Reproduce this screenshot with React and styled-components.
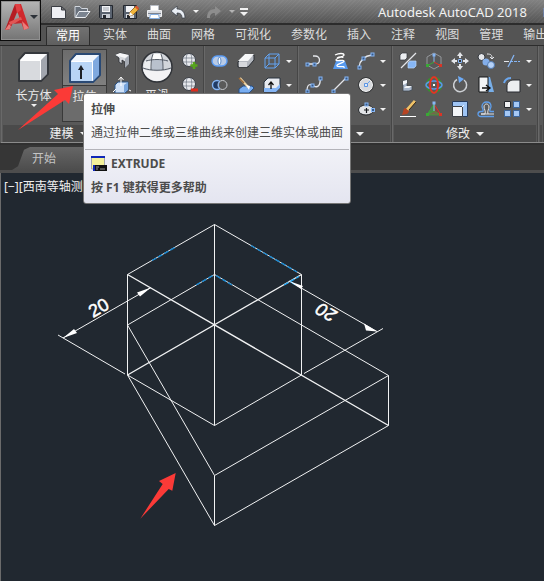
import React from "react";
import styled, { createGlobalStyle, css } from "styled-components";

const MENU_TABS = [
  "常用",
  "实体",
  "曲面",
  "网格",
  "可视化",
  "参数化",
  "插入",
  "注释",
  "视图",
  "管理",
  "输出",
];

const BLUE = "#86b6f5";
const LIGHT = "#e4e6ea";

const Logo = () => (
  <svg width="25" height="28" viewBox="0 0 25 28">
    <path d="M10 1h5l-2 6L5 26l-5 1z" fill="#b51d23" />
    <path d="M10 1h6l8 24-5 2-7-19z" fill="#d0282c" />
    <path d="M10 1h5l1 6-4 3z" fill="#e04043" />
    <path d="M4 19l12-5 1 3-12 5z" fill="#e25654" />
    <path d="M2 25l13-8 4 1-1 2-10 1-5 6z" fill="#c3262b" />
    <path d="M17 18l7 7-5 2z" fill="#e87d7a" />
    <path d="M0 27l4-6 2 2-1 3z" fill="#e87d7a" />
  </svg>
);

const Caret = ({ size = 6, color = "#f1f1f1" }) => (
  <svg width={size} height={size / 2} viewBox="0 0 6 3">
    <path d="M0 0h6L3 3z" fill={color} />
  </svg>
);

const QUICK = {
  新建: (
    <path
      d="M1.500 2.500h10l4 3.500v8.500h-14z M11.500 2.500v3.500h4"
      fill="#eeeff3"
      stroke="#3a3d43"
    />
  ),
  打开: (
    <>
      <path d="M1 13.500v-11h5l1.500 2h6v3" fill="#69717c" stroke="#d2d7de" />
      <path d="M1.500 13.500l3.500-6h11l-4.500 6z" fill="#7b8490" stroke="#eceff3" />
    </>
  ),
  保存: (
    <>
      <path d="M1.500 1.500h13v13h-12l-1-1z" fill="#5a6370" stroke="#23272e" />
      <path d="M4 2h8v6H4z" fill="#f2f3f6" />
      <path d="M5 4h6M5 6h6" stroke="#9ba1ab" />
      <path d="M4 10h8v4H4z" fill="#c8cdd6" />
      <path d="M5 11h3v3H5z" fill="#23272e" />
    </>
  ),
  另存为: (
    <>
      <path d="M1.500 1.500h13v13h-12l-1-1z" fill="#5a6370" stroke="#23272e" />
      <path d="M4 2h8v6H4z" fill="#f2f3f6" />
      <path d="M4 10h8v4H4z" fill="#d7dae0" />
      <path d="M5 11h3v3H5z" fill="#23272e" />
      <path d="M7 12l1-4 6-6 3 3-6 6z" fill="#f1b53b" stroke="#774b14" strokeWidth=".7" />
      <path d="M13 3l1.500-1.500 2.500 2.500L15.500 6z" fill="#d9532f" />
      <path d="M7 12l1-4 3 3z" fill="#fff" />
    </>
  ),
  打印: (
    <>
      <path d="M4.500 1.500h8v5h-8z" fill="#fff" stroke="#b7bcc5" />
      <path d="M1.500 6.500h14v6h-14z" fill="#d5d8de" stroke="#eff0f2" />
      <path d="M2 9.500h13" stroke="#7d8490" />
      <path d="M4.500 10.500h8l1 4h-10z" fill="#fff" stroke="#84ade0" />
    </>
  ),
  放弃: (
    <path
      d="M1 7l6-5v3c5 0 8 3 8 9h-3c0-3-1-5-5-5v3z"
      fill="#e9eef4"
      stroke="#343a43"
      strokeWidth=".7"
    />
  ),
  重做: <path d="M15 7L9 2v3c-5 0-8 3-8 9h3c0-3 1-5 5-5v3z" fill="#8d8d8d" />,
};

const BoxIcon = () => (
  <svg width="32" height="32" viewBox="0 0 32 32">
    <path
      d="M1 9l6-7h23v21l-7 7H1z"
      fill="#fff"
      stroke="#34373c"
      strokeWidth="2"
      strokeLinejoin="round"
    />
    <path d="M2 9l6-6h21l-6 6z" fill="#fcfcfd" />
    <path d="M2 10h20v19H2z" fill="#d8dade" />
    <path d="M23 9l6-6v20l-6 6z" fill="#a2a6ae" />
  </svg>
);

const ExtrudeIcon = () => (
  <svg width="32" height="32" viewBox="0 0 32 32">
    <path
      d="M1 9l6-7h24v21l-7 7H1z"
      fill="#fff"
      stroke="#294974"
      strokeWidth="2"
      strokeLinejoin="round"
    />
    <path d="M2 9l6-6h22l-6 6z" fill="#f2f7fd" />
    <path d="M2 10h21v19H2z" fill="#b9d5f5" />
    <path d="M24 9l6-6v20l-6 6z" fill="#7fa9df" />
    <path d="M12 27V15" stroke="#1c2026" strokeWidth="2" />
    <path d="M9 18l3-5 3 5z" fill="#1c2026" />
  </svg>
);

const SphereIcon = () => (
  <svg width="32" height="32" viewBox="0 0 32 32">
    <circle cx="16" cy="16" r="15" fill="#d3d6db" stroke="#303338" strokeWidth="1.500" />
    <path d="M2 18c7 3 21 3 28 0-1 7-7 12-14 12S3 25 2 18z" fill="#f3f3f5" />
    <path d="M11 9h10l1 10H10z" fill="#b9c1cd" />
    <path d="M11 3h10v6H11z" fill="#fdfdfd" />
    <path d="M4 10l7-1-1 10-8-2z" fill="#eceef0" />
    <path
      d="M5 10c7-2 15-2 22 0M2 17c8 3 20 3 28 0M12 3c-2 5-2 11-2 16M20 3c2 5 2 11 2 16"
      fill="none"
      stroke="#565d68"
    />
  </svg>
);

const MeshBall = () => (
  <>
    <circle cx="8" cy="8" r="6.500" fill="#e8eaee" stroke="#3b3f46" />
    <path
      d="M2 6h12M2 10h12M6 2c-1 4-1 7 0 12M10 2c1 4 1 7 0 12"
      fill="none"
      stroke="#6d7581"
      strokeWidth=".7"
    />
  </>
);

const Node = ({ x, y }) => (
  <rect x={x - 1} y={y - 1} width="3" height="3" fill="#375986" stroke={BLUE} />
);

const TOOLS = {
  多段体: (
    <>
      <path
        d="M2 3l5-2 9 2v9l-4 4v-6l-3-2v4l-3-2V6z"
        fill="#d8dade"
        stroke="#2b2f35"
        strokeWidth=".8"
      />
      <path d="M12 7l4-4v9l-4 4z" fill="#a6abb4" />
      <path d="M2 3l5-2 9 2-4 3z" fill="#f7f7f8" />
    </>
  ),
  按住并拖动: (
    <>
      <path d="M2 9l3-3h10v8l-3 3H2z" fill="#cfe1f7" stroke="#29548a" />
      <path d="M11 9l4-3v8l-4 3z" fill="#78a5dc" />
      <path d="M8 10V2M5.500 4L8 1l2.500 3M0 16l3-3M16 14l2 1" fill="none" stroke="#fff" />
    </>
  ),
  提高平滑度: (
    <>
      <MeshBall />
      <path d="M13 10v7M9.500 13.500h7" stroke="#57a51c" strokeWidth="2.600" />
    </>
  ),
  降低平滑度: (
    <>
      <MeshBall />
      <path d="M10 14h7" stroke="#dd2b1c" strokeWidth="3" />
    </>
  ),
  并集: (
    <>
      <rect
        x="1"
        y="4"
        width="15"
        height="10"
        rx="5"
        fill="#b9cbe6"
        stroke="#5a9cf5"
        strokeWidth="1.400"
      />
      <path d="M8.500 5c-2 2-2 6 0 8 2-2 2-6 0-8z" fill="#fff" stroke="#608fca" />
    </>
  ),
  差集: (
    <>
      <circle cx="6" cy="9" r="4.500" fill="#203b65" stroke={BLUE} strokeWidth="1.400" />
      <circle cx="11.500" cy="9" r="4.500" fill="#5a5a5a" stroke="#c5c8cd" />
      <path d="M9 5c-2 2-2 6 0 8" fill="none" stroke={BLUE} />
    </>
  ),
  剖切: (
    <>
      <path d="M1 10l6-7h10v5l-6 7H1z" fill="#b4b8bf" stroke="#292d33" />
      <path d="M1 9l7-7h9l-6 7z" fill="#f6f7f8" />
      <path d="M2 10h8v5H2z" fill="#d6d8dc" />
    </>
  ),
  干涉: (
    <>
      <path d="M2 13l4-3h9l2 2-5 5H2z" fill="#79aef1" stroke="#264f86" />
      <path d="M3 2l9 10" stroke="#ecd2a2" strokeWidth="2" />
      <path d="M2 2l5 5" stroke="#9b6c3b" strokeWidth="1.500" />
      <path d="M9 9l4 1-1 4z" fill="#fff" />
    </>
  ),
  提取边: (
    <path
      d="M2 6h10v10H2zM6 2h10v10H6zM2 6l4-4M12 6l4-4M2 16l4-4M12 16l4-4"
      fill="none"
      stroke="#63a3f2"
    />
  ),
  拉伸面: (
    <>
      <path d="M1 6l4-4h12v10l-4 4H1z" fill="#e8ebf0" stroke="#28323f" />
      <path d="M1 12h12l4-4v4l-4 4H1z" fill={BLUE} />
      <path d="M8 13V7M5.500 9L8 6l2.500 3" fill="none" stroke="#111" strokeWidth="1.300" />
    </>
  ),
  多段线: (
    <>
      <path d="M2 12h8c6 0 6-8 0-8H8" fill="none" stroke={LIGHT} strokeWidth="1.300" />
      <Node x={2} y={12} />
      <Node x={9} y={12} />
    </>
  ),
  螺旋: (
    <>
      <path d="M5 9h9l3 8H2z" fill="#5699ee" />
      <path
        d="M4 3c4-2 9-2 9 0s-8 3-8 5 8-1 8 1-8 3-7 5 8-1 7 2M6 6c3-2 6-1 6 0"
        fill="none"
        stroke="#fff"
        strokeWidth="1.300"
      />
    </>
  ),
  圆弧: (
    <>
      <path d="M2 15C3 8 7 4 15 3" fill="none" stroke={LIGHT} strokeWidth="1.300" />
      <Node x={2} y={15} />
      <Node x={6} y={6} />
      <Node x={15} y={2} />
    </>
  ),
  样条曲线: (
    <>
      <path d="M2 15c0-8 4-7 7-5s7 0 6-8" fill="none" stroke={LIGHT} strokeWidth="1.300" />
      <Node x={2} y={15} />
      <Node x={7} y={9} />
      <Node x={15} y={2} />
    </>
  ),
  直线: (
    <>
      <path d="M2 15L15 2" stroke={LIGHT} strokeWidth="1.300" />
      <Node x={2} y={15} />
      <Node x={15} y={2} />
    </>
  ),
  圆: (
    <>
      <circle cx="9" cy="9" r="6.500" fill="#d7d9dd" stroke="#fff" />
      <circle cx="9" cy="9" r="7.500" fill="none" stroke="#26292d" strokeWidth=".7" />
      <path d="M9 9l4-4" stroke="#67a2ee" />
      <path d="M7.500 7.500h3v3h-3z" fill="#dfe9f7" stroke="#5b95e4" />
    </>
  ),
  椭圆: (
    <>
      <ellipse cx="9" cy="10" rx="7.500" ry="5" fill="#e2e4e7" stroke="#26292d" />
      <path d="M7 10h5M9.500 8v5" stroke="#16191d" strokeWidth="1.200" />
      <Node x={9} y={4} />
      <Node x={15.5} y={9.5} />
    </>
  ),
  三维对齐: (
    <>
      <path d="M1 3l2-2h5v5L6 8H1z" fill="#eceef1" stroke="#30343a" strokeWidth=".7" />
      <path d="M9 11l2-2h6v5l-2 2H9z" fill={BLUE} stroke="#b9d5f8" strokeWidth=".7" />
      <path d="M2 16L17 1" stroke={LIGHT} strokeWidth="1.200" />
    </>
  ),
  三维移动: (
    <>
      <path d="M9 1L2 5v8l7 4 7-4V5z" fill="none" stroke="#95989c" />
      <path d="M9 10V3" stroke={BLUE} />
      <path d="M9 10l-7 4" stroke="#39a935" />
      <path d="M9 10l7 4" stroke="#db3425" />
      <path d="M7.500 1.500h3v3h-3z" fill={BLUE} />
      <path d="M1 12h3v3H1z" fill="#39a935" />
      <path d="M14 12h3v3h-3z" fill="#db3425" />
    </>
  ),
  移动: (
    <>
      <path
        d="M9 0l3 4h-2v2H8V4H6zM9 18l3-4h-2v-2H8v2H6zM0 9l4-3v2h2v2H4v2zM18 9l-4-3v2h-2v2h2v2z"
        fill={LIGHT}
      />
      <path d="M7.500 7.500h3v3h-3z" fill="#333" stroke={BLUE} />
    </>
  ),
  复制: (
    <>
      <circle cx="4.500" cy="5" r="3.500" fill="#e5e7eb" stroke="#33373d" />
      <circle cx="9" cy="10" r="3.500" fill="#83aeea" />
      <circle cx="14" cy="13" r="3.500" fill="#b5d1f7" stroke="#517bb2" />
      <path d="M10 2c4 0 5 1 5 4M13 5l2 2 2-2" fill="none" stroke={LIGHT} />
    </>
  ),
  修剪: (
    <>
      <path d="M1 9.500h5" stroke={LIGHT} />
      <path d="M7 9.500h10" stroke={BLUE} strokeDasharray="3 1" />
      <path d="M5 15L11 3" stroke={BLUE} strokeWidth="1.200" />
    </>
  ),
  三维镜像: (
    <>
      <path d="M4 5l4-1v6h5v4l-3 1H4z" fill="#abb8cb" stroke="#3b424c" strokeWidth=".7" />
      <path d="M4 5l4-1v3l-4 2zM7 10h6l-3 2H5z" fill="#f3f5f8" />
    </>
  ),
  三维旋转: (
    <>
      <circle cx="9" cy="9" r="7.500" fill="none" stroke="#36932c" strokeWidth="1.600" />
      <ellipse cx="9" cy="9" rx="8" ry="4" fill="none" stroke="#5798e8" strokeWidth="1.600" />
      <ellipse cx="9" cy="9" rx="4" ry="8" fill="none" stroke="#e43325" strokeWidth="2" />
      <path d="M8 8h2v2H8z" fill="#fff" />
    </>
  ),
  旋转: (
    <>
      <path d="M6 3.500a6.500 6.500 0 1 0 7 .500" fill="none" stroke="#cdd0d4" strokeWidth="1.500" />
      <path d="M7 0l6 3-5 4z" fill="#6caaf6" />
    </>
  ),
  拉长: (
    <>
      <path d="M11 1h2l4 15h-6z" fill="#78afe9" />
      <path d="M2 1h9v15H2z" fill="#f4f5f6" stroke="#151719" />
      <path d="M5 12h7M9 9l4 3-4 3" fill="none" stroke="#111" strokeWidth="1.400" />
    </>
  ),
  圆角: (
    <>
      <path d="M4 16V9c1-4 4-5 7-5h6v12z" fill="#eceef0" stroke="#282b30" />
      <path d="M1 7c1-3 3-5 7-5" fill="none" stroke="#6ba7ee" strokeWidth="2" />
    </>
  ),
  编辑: (
    <>
      <path d="M1 16.500h16" stroke="#fff" />
      <path d="M16 1L8 10" stroke="#f0c267" strokeWidth="3" />
      <path d="M17 2l-7 8" stroke="#2b2218" strokeWidth="1" />
      <path d="M6 8l4 3c-1 4-4 3-7 4 1-2 1-6 3-7z" fill="#b84422" />
    </>
  ),
  三维缩放: (
    <>
      <path d="M9 4l7 11-7-4z" fill="#7f454b" stroke="#db3425" />
      <path d="M9 4L2 15l7-4z" fill="#4c8251" stroke="#39a935" />
      <path d="M2 15l7-4 7 4z" fill="#6f6a4a" stroke="#39a935" strokeWidth=".7" />
      <path d="M9 3v8" stroke={BLUE} />
      <path d="M7.500 1.500h3v3h-3z" fill={BLUE} />
      <path d="M1 13h3v3H1z" fill="#39a935" />
      <path d="M14 13h3v3h-3z" fill="#db3425" />
    </>
  ),
  缩放: (
    <>
      <path d="M1.500 1.500h15v15h-15z" fill="#9ec4f4" stroke="#263b5c" />
      <path d="M1.500 6.500h10v10h-10z" fill="#f2f4f7" stroke="#3d4046" />
      <path d="M8 10l5-5" stroke="#edf5ff" />
    </>
  ),
  偏移: (
    <>
      <path
        d="M17 16.500H4c-4 0-4-5 0-5h2c1-2-1-3-1-5 0-6 9-6 9 0 0 2-2 3-1 5h4"
        fill="none"
        stroke="#5f9eea"
        strokeWidth="1.300"
      />
      <path
        d="M17 14H4h4c1-3-1-5-1-7 0-4 5-4 5 0 0 2-2 4-1 7"
        fill="none"
        stroke={LIGHT}
      />
    </>
  ),
  阵列: (
    <>
      <path d="M1.500 1.500h6v6h-6z" fill="#f0f1f3" stroke="#24272c" />
      <path d="M10.500 1.500h6v6h-6zM1.500 10.500h6v6h-6zM10.500 10.500h6v6h-6z" fill="#a5c8f5" stroke="#3b659c" />
    </>
  ),
};

const Tool = ({ name }) => (
  <ToolButton aria-label={name}>
    <svg width="18" height="18" viewBox="0 0 18 18">
      {TOOLS[name]}
    </svg>
  </ToolButton>
);

// every row ends in a drop-down arrow
const ToolRows = ({ rows }) =>
  rows.map((row) => (
    <ToolRow key={row[0]}>
      {row.map((name) => (
        <Tool key={name} name={name} />
      ))}
      <CaretButton aria-label={`${row[row.length - 1]}选项`}>
        <Caret />
      </CaretButton>
    </ToolRow>
  ));

const Drawing = () => (
  <svg width="400" height="340" viewBox="1 201 400 340" fill="none">
    <g stroke="#f1f2f3" strokeWidth="1">
      <path d="M127.500 274.500L214.500 224.500L301.500 274.500V375M214.500 224.500V425.500M127.500 274.500V375" />
      <path d="M127.500 274.500L388.500 425.500M301.500 274.500L127.500 375" strokeWidth="1.400" />
      <path d="M127.500 325L214.500 274.500L388.500 375.500V425.500" />
      <path d="M127.500 325L214.500 475.500L388.500 375.500M214.500 475.500V525.500" />
      <path d="M127.500 375L214.500 525.500L388.500 425.500" />
      <path d="M127.500 375L214.500 425.500L301.500 375" />
      <path d="M58 335L125 374M63 338L151 287.500M304 373.500L383 328.500M289 281L377 331.500" />
    </g>
    <g stroke="#1787d0" strokeWidth="1.400" strokeDasharray="5 2">
      <path d="M152 260.500L175 247.500M251 245.500L297 272M196 285L213 275.500M216 275.500L232 285" />
      <path d="M284 285L299 276.500M291 282L297 286" stroke="#20a7f5" />
    </g>
    <g fill="#fff">
      <path d="M63 338l11-9 3 4zM151 287.500l-14 5 3 4zM377 331.500l-13-8 2 7zM289 281l14 5-2 3z" />
      <path
        d="M175.700 473l-16.700 8 3.700 3-22.400 34.700 28.400-29.700 3.600 1.700z"
        fill="#fb3a37"
      />
    </g>
    <DimText transform="translate(93 318) rotate(-30)">20</DimText>
    <DimText slanted transform="translate(338 312) rotate(210)">
      20
    </DimText>
  </svg>
);

const App = () => (
  <>
    <GlobalStyle />
    <Window>
      <Header>
        <AppButton aria-label="应用程序菜单">
          <Logo />
          <Caret size={8} color="#2d3239" />
        </AppButton>
        <TitleBar>
          <QuickAccess>
            {Object.keys(QUICK).map((name) => (
              <React.Fragment key={name}>
                <QuickButton aria-label={name}>
                  <svg width="17" height="16" viewBox="0 0 17 16">
                    {QUICK[name]}
                  </svg>
                </QuickButton>
                {name === "放弃" && (
                  <QuickButton narrow aria-label="放弃列表">
                    <Caret />
                  </QuickButton>
                )}
              </React.Fragment>
            ))}
            <QuickButton narrow aria-label="重做列表">
              <Caret color="#b4b4b4" />
            </QuickButton>
            <QuickButton narrow aria-label="自定义快速访问工具栏">
              <svg width="8" height="8" viewBox="0 0 8 8">
                <path d="M0 0h8v2H0zM0 4h8L4 8z" fill="#f1f1f1" />
              </svg>
            </QuickButton>
          </QuickAccess>
          <Title>
            <span>Autodesk AutoCAD 2018</span>
            <span>D</span>
          </Title>
        </TitleBar>
        <MenuBar>
          {MENU_TABS.map((tab, i) => (
            <MenuTab key={tab} active={i === 0}>
              {tab}
            </MenuTab>
          ))}
        </MenuBar>
      </Header>

      <Ribbon>
        <Panel>
          <PanelBody left={9}>
            <BigButton>
              <BigIcon>
                <BoxIcon />
              </BigIcon>
              长方体
              <Caret />
            </BigButton>
            <BigButton hovered>
              <BigIcon hovered>
                <ExtrudeIcon />
              </BigIcon>
              拉伸
            </BigButton>
            <ToolColumn>
              <Tool name="多段体" />
              <Tool name="按住并拖动" />
            </ToolColumn>
          </PanelBody>
          <PanelTitle>
            建模 <Caret size={8} />
          </PanelTitle>
        </Panel>
        <Panel>
          <PanelBody left={2}>
            <BigButton narrow>
              <BigIcon>
                <SphereIcon />
              </BigIcon>
              平滑
            </BigButton>
            <ToolColumn>
              <Tool name="提高平滑度" />
              <Tool name="降低平滑度" />
            </ToolColumn>
          </PanelBody>
          <PanelTitle />
        </Panel>
        <Panel>
          <PanelBody left={2}>
            <div>
              <ToolRows
                rows={[
                  ["并集", "剖切", "提取边"],
                  ["差集", "干涉", "拉伸面"],
                ]}
              />
            </div>
          </PanelBody>
          <PanelTitle />
        </Panel>
        <Panel>
          <PanelBody left={2}>
            <div>
              <ToolRows
                rows={[
                  ["多段线", "螺旋", "圆弧"],
                  ["样条曲线", "直线", "圆"],
                ]}
              />
              <ToolRow end>
                <Tool name="椭圆" />
                <CaretButton aria-label="椭圆选项">
                  <Caret />
                </CaretButton>
              </ToolRow>
            </div>
          </PanelBody>
          <PanelTitle end>
            <Caret size={8} />
          </PanelTitle>
        </Panel>
        <Panel>
          <PanelBody left={2}>
            <div>
              <ToolRows
                rows={[
                  ["三维对齐", "三维移动", "移动", "复制", "修剪"],
                  ["三维镜像", "三维旋转", "旋转", "拉长", "圆角"],
                  ["编辑", "三维缩放", "缩放", "偏移", "阵列"],
                ]}
              />
            </div>
          </PanelBody>
          <PanelTitle>
            修改 <Caret size={8} />
          </PanelTitle>
        </Panel>
        <Panel grow>
          <PanelBody left={0} />
          <PanelTitle />
        </Panel>
      </Ribbon>

      <FileTabs>
        <FileTab>开始</FileTab>
      </FileTabs>

      <Canvas>
        <ViewLabel>[−][西南等轴测</ViewLabel>
        <Drawing />
      </Canvas>

      <Tooltip role="tooltip">
        <TipSection>
          <strong>拉伸</strong>
          <p>通过拉伸二维或三维曲线来创建三维实体或曲面</p>
        </TipSection>
        <TipSection lower>
          <Command>
            <svg width="16" height="16" viewBox="0 0 16 16">
              <path d="M.5 1h13v12H.5z" fill="#f5f29a" stroke="#a6a9ab" />
              <path d="M0 0h14v2H0z" fill="#1027b8" />
              <path d="M2 9h14v6H2z" fill="#111" />
              <path d="M2 9h2v6H2z" fill="#1027b8" />
              <path d="M5 11h3M5 13h2M9 13h5" stroke="#bbb" strokeWidth=".8" />
            </svg>
            EXTRUDE
          </Command>
          <strong>按 F1 键获得更多帮助</strong>
        </TipSection>
      </Tooltip>
      <Pointer width="56" height="46" viewBox="0 0 56 46">
        <path d="M55 1L36 5l4 4L0 45l47-30 4 4z" fill="#fb3a37" />
      </Pointer>
    </Window>
  </>
);

export default App;

const GlobalStyle = createGlobalStyle`
  * {
    box-sizing: border-box;
  }
  body {
    margin: 0;
    overflow: hidden;
    background: #212830;
    font: 12px/16px "Noto Sans", "Noto Sans CJK SC", sans-serif;
  }
  button {
    margin: 0;
    padding: 0;
    border: 0;
    background: none;
    color: inherit;
    font: inherit;
    cursor: pointer;
  }
  svg {
    display: block;
    flex: none;
  }
  p {
    margin: 0;
  }
`;
const Window = styled.div`
  position: relative;
  display: flex;
  flex-direction: column;
  min-height: 100vh;
  overflow: hidden;
`;
const Header = styled.header`
  display: grid;
  grid-template-columns: 41px minmax(0, 1fr);
  grid-template-rows: 25px 20px;
  background: #545454;
  border-bottom: 1px solid #2c2c2c;
`;
const AppButton = styled.button`
  grid-row: 1 / 3;
  display: flex;
  align-items: center;
  justify-content: center;
  height: 41px;
  padding: 0 0 8px 2px;
  border: 1px solid #0c0c0c;
  background: linear-gradient(#b5b5b5, #747474);
  box-shadow: inset 0 0 0 1px #8f8f8f;
`;
const TitleBar = styled.div`
  display: flex;
  align-items: center;
  min-width: 0;
  overflow: hidden;
  border-bottom: 2px solid #2c2c2c;
  background:
    repeating-linear-gradient(135deg, rgba(255, 255, 255, 0.04) 0 1px, transparent 1px 3px),
    linear-gradient(#828282, #555555);
`;
const QuickAccess = styled.div`
  display: flex;
  align-items: center;
  flex: none;
  padding-left: 5px;
`;
const QuickButton = styled.button`
  display: flex;
  align-items: center;
  justify-content: center;
  width: ${(p) => (p.narrow ? "12px" : "24px")};
  height: 20px;
`;
const Title = styled.div`
  display: flex;
  flex: none;
  gap: 16px;
  margin-left: 128px;
  color: #f2f2f2;
  font-size: 13px;
  white-space: nowrap;
`;
const MenuBar = styled.nav`
  display: flex;
  min-width: 0;
  padding-left: 5px;
  overflow: hidden;
`;
const MenuTab = styled.button`
  flex: none;
  height: 20px;
  padding: 0 10px;
  color: #dcdcdc;
  ${(p) =>
    p.active &&
    css`
      margin: 1px 3px 0 0;
      height: 19px;
      padding: 0 9px;
      border: 1px solid #2c2c2c;
      border-bottom: 0;
      border-radius: 2px 2px 0 0;
      background: linear-gradient(#727272, #5f5f5f);
      color: #fff;
    `}
`;
const Ribbon = styled.section`
  display: flex;
  padding-left: 1px;
  background: #595959;
  border-bottom: 2px solid #303030;
`;
const Panel = styled.div`
  display: flex;
  flex-direction: column;
  flex: ${(p) => (p.grow ? "1 0 0" : "none")};
  border: solid #8b8b8b;
  border-width: 0 0 1px;
  box-shadow: inset -1px 0 #464646, inset 1px 0 #696969;
  padding: 0 1px;
`;
const PanelBody = styled.div`
  display: flex;
  gap: 6px;
  height: 79px;
  padding: 3px 4px 0 ${(p) => p.left}px;
`;
const PanelTitle = styled.div`
  display: flex;
  align-items: center;
  justify-content: ${(p) => (p.end ? "flex-end" : "center")};
  gap: 6px;
  height: 17px;
  margin: 0 1px;
  padding: 0 ${(p) => (p.end ? "26px" : "0")};
  background: #4a4a4a;
  color: #f0f0f0;
`;
const BigIcon = styled.span`
  display: flex;
  align-items: center;
  justify-content: center;
  width: 100%;
  height: 36px;
  margin-bottom: 3px;
  background: ${(p) => (p.hovered ? "linear-gradient(#6c6c6c, #808080)" : "none")};
  border-bottom: 1px solid ${(p) => (p.hovered ? "#393939" : "transparent")};
`;
const BigButton = styled.button`
  display: flex;
  flex-direction: column;
  align-items: center;
  width: ${(p) => (p.narrow ? "36px" : "45px")};
  height: 73px;
  color: #e9e9e9;
  ${(p) =>
    p.hovered &&
    css`
      border: 1px solid #393939;
      background: #6c6c6c;
    `}
`;
const ToolColumn = styled.div`
  display: flex;
  flex-direction: column;
`;
const ToolRow = styled.div`
  display: flex;
  justify-content: ${(p) => (p.end ? "flex-end" : "flex-start")};
`;
const CaretButton = styled.button`
  display: flex;
  align-items: center;
  justify-content: center;
  width: 8px;
  height: 24px;
`;
const ToolButton = styled.button`
  display: flex;
  align-items: center;
  justify-content: center;
  width: 26px;
  height: 24px;
  ${ToolColumn} & {
    width: 18px;
  }
`;
const FileTabs = styled.div`
  display: flex;
  align-items: flex-end;
  height: 28px;
  padding-left: 12px;
  background: #363636;
  border-bottom: 3px solid #4d4d4d;
`;
const FileTab = styled.button`
  width: 160px;
  height: 23px;
  padding-left: 20px;
  background: linear-gradient(#666666, #4d4d4d);
  clip-path: polygon(0 100%, 6px 84%, 12px 12%, 18px 0, 100% 0, 100% 100%);
  color: #c4c4c4;
  text-align: left;
`;
const Canvas = styled.main`
  flex: 1;
  border-left: 1px solid #6b6b6b;
  background: #212830;
`;
const ViewLabel = styled.div`
  height: 28px;
  padding: 6px 3px;
  color: #f0f0f0;
`;
const DimText = styled.text`
  fill: #fff;
  stroke: #fff;
  stroke-width: 0.5px;
  font: ${(p) => (p.slanted ? "italic" : "normal")} 18px "Liberation Sans", sans-serif;
`;
const Tooltip = styled.div`
  position: absolute;
  top: 93px;
  left: 83px;
  width: 268px;
  border: 1px solid #767676;
  border-radius: 3px;
  background: linear-gradient(#ffffff, #e4e5f0);
  color: #4c4c4c;
`;
const TipSection = styled.div`
  display: flex;
  flex-direction: column;
  gap: 7px;
  padding: 8px 7px;
  white-space: nowrap;
  ${(p) =>
    p.lower &&
    css`
      gap: 8px;
      margin: 0 1px;
      padding: 6px 6px 7px;
      border-top: 1px solid #b3b3b9;
    `}
`;
const Command = styled.strong`
  display: flex;
  align-items: center;
  gap: 4px;
`;
const Pointer = styled.svg`
  position: absolute;
  top: 85px;
  left: 18px;
`;
